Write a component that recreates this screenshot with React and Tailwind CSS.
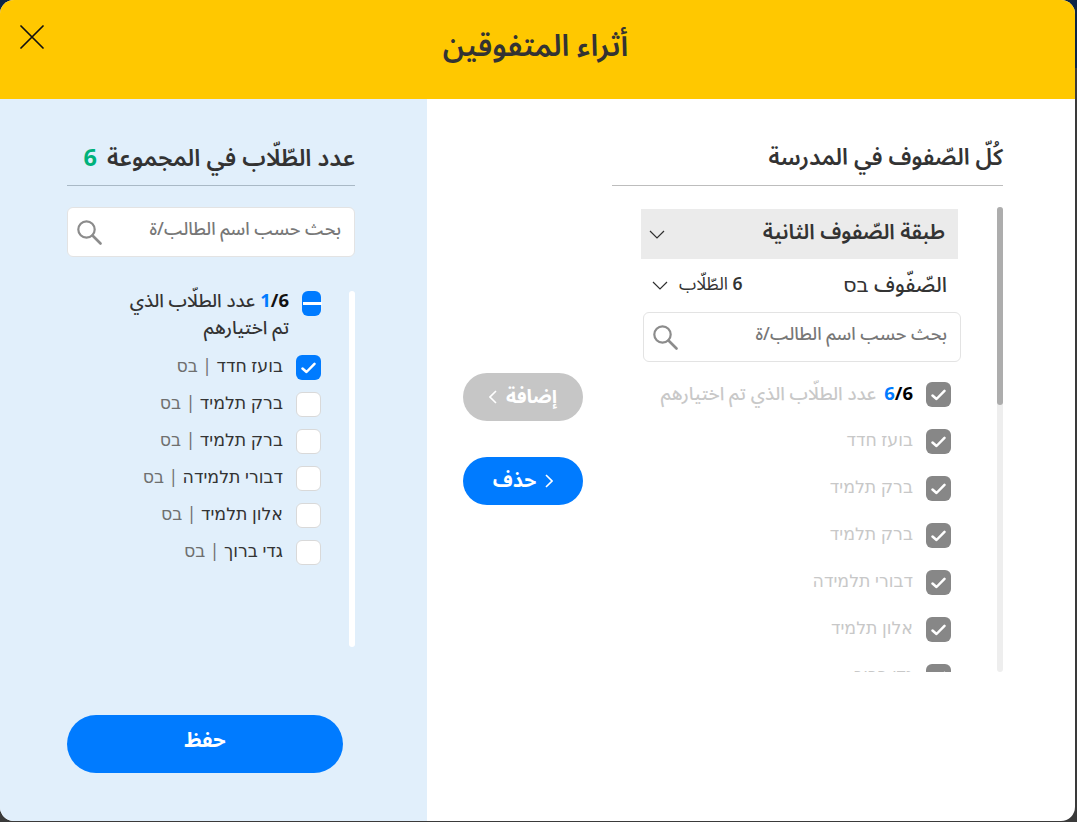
import React from "react";

const FONT = "font-['Noto_Sans_Arabic','DejaVu_Sans','Noto_Sans','Open_Sans',sans-serif]";

const SearchIcon = () => (
  <svg width="26" height="26" viewBox="0 0 26 26" fill="none" stroke="#8c8c8c" strokeLinecap="round">
    <circle cx="10.5" cy="10.5" r="8.2" strokeWidth="2.2" />
    <path d="M16.5 16.5 L24.5 24.5" strokeWidth="2.6" />
  </svg>
);

const Chevron = ({ w = 16 }) => (
  <svg width={w} height="9" viewBox="0 0 16 9" fill="none" stroke="#2f2f2f" strokeWidth="1.2">
    <path d="M1 1 L8 8 L15 1" />
  </svg>
);

const Check = () => (
  <svg width="15" height="12" viewBox="0 0 15 12" fill="none" stroke="#fff" strokeWidth="2.5" strokeLinecap="round" strokeLinejoin="round">
    <path d="M1.5 6.5 L5.5 10 L13.5 1.8" />
  </svg>
);

const Search = ({ className }) => (
  <div className={`flex h-[50px] items-center justify-between rounded-md border border-[#e3e3e3] bg-white pl-[8px] pr-[13px] ${className}`}>
    <SearchIcon />
    <span dir="rtl" className="pb-[3px] text-[17.7px] font-medium text-[#777777]">بحث حسب اسم الطالب/ة</span>
  </div>
);

const leftRows = [
  ["בועז חדד", true],
  ["ברק תלמיד", false],
  ["ברק תלמיד", false],
  ["דבורי תלמידה", false],
  ["אלון תלמיד", false],
  ["גדי ברוך", false],
];

const rightRows = ["בועז חדד", "ברק תלמיד", "ברק תלמיד", "דבורי תלמידה", "אלון תלמיד", "גדי ברוך"];

export default function App() {
  return (
    <div className={`h-[822px] w-[1077px] overflow-hidden bg-gradient-to-b from-[#0b2447] from-[68px] to-[#3a3a3a] to-[68px] ${FONT}`}>
      <div className="flex h-[821px] w-[1075px] flex-col overflow-hidden rounded-[14px] bg-white">
        {/* Header */}
        <header className="relative flex h-[99px] shrink-0 items-center justify-center bg-[#ffc800] pb-[6px] pr-[4px]">
          <svg className="absolute left-[20px] top-[25px]" width="24" height="24" viewBox="0 0 24 24" fill="none" stroke="#111" strokeWidth="1.7" strokeLinecap="round">
            <path d="M1 1 L23 23 M23 1 L1 23" />
          </svg>
          <h1 dir="rtl" className="text-[30px] font-semibold text-[#333333]">أثراء المتفوقين</h1>
        </header>

        <div className="flex min-h-0 flex-1">
          {/* Left panel */}
          <aside className="flex w-[427px] shrink-0 flex-col bg-[#e1effb] pl-[67px] pr-[72px]">
            <div dir="rtl" className="mt-[43px] flex h-[44px] items-center gap-[10px] border-b border-[#a9b9c6] pb-[10px] text-[23.5px] font-semibold text-[#333333]">
              <span>عدد الطّلّاب في المجموعة</span>
              <span className="font-bold text-[#00b27a]">6</span>
            </div>
            <Search className="mt-[21px]" />
            <div className="mt-[34px] flex h-[356px] justify-between">
              <div className="order-2 flex w-[6px] rounded-full bg-white" />
              <div className="order-1 flex w-[254px] flex-col items-end">
                <div className="flex items-start justify-end gap-[13px]">
                  <div dir="rtl" className="mt-[-3px] w-[170px] text-[18.5px] font-medium leading-[27px] text-[#333333]">
                    <span dir="ltr" className="ml-[5px] inline-block font-bold"><span className="text-[#007bff]">1</span><span className="text-[#111]">/6</span></span>عدد الطلّاب الذي تم اختيارهم
                  </div>
                  <div className="relative h-[25px] w-[19px] rounded-md bg-[#007bff]">
                    <div className="absolute left-[1px] top-[11px] h-[3px] w-[19px] bg-white" />
                  </div>
                </div>
                <div className="mt-[13px] flex flex-col gap-[12px]">
                  {leftRows.map(([name, checked], i) => (
                    <div key={i} className="flex h-[25px] items-center justify-end gap-[13px]">
                      <div dir="rtl" className="text-[17.4px] text-[#333333]">
                        {name} <span className="text-[#6f6f6f]">| בס</span>
                      </div>
                      {checked ? (
                        <div className="flex h-[25px] w-[25px] items-center justify-center rounded-md bg-[#007bff]"><Check /></div>
                      ) : (
                        <div className="h-[25px] w-[25px] rounded-md border border-[#d9d9d9] bg-white" />
                      )}
                    </div>
                  ))}
                </div>
              </div>
            </div>
            <button dir="rtl" className="mt-[68px] h-[58px] w-[276px] rounded-full bg-[#007bff] pb-[6px] text-[20.5px] font-bold text-white">حفظ</button>
          </aside>

          {/* Middle buttons */}
          <div className="flex w-[185px] shrink-0 flex-col pl-[36px] pt-[274px]">
            <button className="flex h-[48px] w-[120px] items-center justify-center gap-[9px] rounded-full bg-[#c6c6c6] text-[19.5px] font-bold text-white">
              <svg width="8" height="14" viewBox="0 0 8 14" fill="none" stroke="#fff" strokeWidth="1.6"><path d="M7 1 L1 7 L7 13" /></svg>
              <span dir="rtl">إضافة</span>
            </button>
            <button className="mt-[36px] flex h-[48px] w-[120px] items-center justify-center gap-[9px] rounded-full bg-[#007bff] text-[19.5px] font-bold text-white">
              <span dir="rtl">حذف</span>
              <svg width="8" height="14" viewBox="0 0 8 14" fill="none" stroke="#fff" strokeWidth="1.6"><path d="M1 1 L7 7 L1 13" /></svg>
            </button>
          </div>

          {/* Right panel */}
          <section className="flex w-[391px] shrink-0 flex-col">
            <div dir="rtl" className="mt-[43px] flex h-[44px] items-center border-b border-[#bdbdbd] pb-[10px] text-[22.8px] font-semibold text-[#333333]">
              كُلّ الصّفوف في المدرسة
            </div>
            <div className="mt-[21px] flex h-[465px] items-start">
              <div className="ml-[29px] h-[465px] w-[320px] overflow-hidden">
                <div className="mt-[2px] flex h-[50px] w-[317px] items-center justify-between bg-[#ebebeb] pl-[8px] pr-[13px]">
                  <Chevron />
                  <span dir="rtl" className="pb-[3px] text-[21px] font-semibold text-[#333333]">طبقة الصّفوف الثانية</span>
                </div>
                <div className="flex h-[53px] w-[317px] items-center justify-between pl-[11px] pr-[11px]">
                  <div className="flex items-center gap-[11px]">
                    <Chevron />
                    <span dir="rtl" className="text-[17.5px] text-[#333333]"><span className="font-semibold">6</span> الطّلّاب</span>
                  </div>
                  <span dir="rtl" className="text-[21px] font-medium text-[#333333]">الصّفّوف בס</span>
                </div>
                <Search className="ml-[2px] w-[318px]" />
                <div className="ml-[17px] mt-[20px] flex w-[293px] flex-col gap-[22px]">
                  <div className="flex h-[25px] items-center justify-end gap-[13px]">
                    <div dir="rtl" className="whitespace-nowrap text-[18.5px] font-medium text-[#c8c8c8]">
                      <span dir="ltr" className="ml-[8px] inline-block font-bold"><span className="text-[#007bff]">6</span><span className="text-black">/6</span></span>عدد الطلّاب الذي تم اختيارهم
                    </div>
                    <div className="flex h-[25px] w-[25px] shrink-0 items-center justify-center rounded-md bg-[#878787]"><Check /></div>
                  </div>
                  {rightRows.map((name, i) => (
                    <div key={i} className="flex h-[25px] items-center justify-end gap-[13px]">
                      <span dir="rtl" className="text-[17.4px] text-[#c8c8c8]">{name}</span>
                      <div className="flex h-[25px] w-[25px] items-center justify-center rounded-md bg-[#878787]"><Check /></div>
                    </div>
                  ))}
                </div>
              </div>
              <div className="ml-[36px] h-[465px] w-[6px] rounded-full bg-[#eeeeee]">
                <div className="h-[198px] w-[6px] rounded-full bg-[#adadad]" />
              </div>
            </div>
          </section>
        </div>
      </div>
    </div>
  );
}
